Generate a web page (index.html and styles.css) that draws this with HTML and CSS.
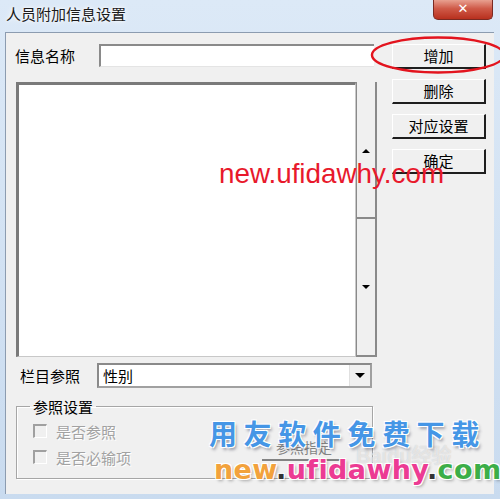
FILE: index.html
```html
<!DOCTYPE html>
<html lang="zh-CN">
<head>
    <meta charset="UTF-8">
    <title>人员附加信息设置</title>
    <link rel="stylesheet" href="styles.css">
</head>
<body>

<div class="window">
    <!-- Title Bar -->
    <div class="titlebar">
        <span class="title">人员附加信息设置</span>
        <span class="close">&#x2715;</span>
    </div>

    <!-- Dialog Body -->
    <div class="client">
        <div class="main">
            <div class="left">
                <div class="name-row">
                    <span class="label">信息名称</span>
                    <div class="field"></div>
                </div>
                <div class="list-wrap">
                    <div class="list"></div>
                    <div class="scroll">
                        <div class="scroll-part up"><span class="arrow-up"></span></div>
                        <div class="scroll-part down"><span class="arrow-down"></span></div>
                    </div>
                </div>
            </div>
            <div class="buttons">
                <div class="btn">增加</div>
                <div class="btn">删除</div>
                <div class="btn">对应设置</div>
                <div class="btn">确定</div>
            </div>
        </div>

        <div class="ref-row">
            <span class="label">栏目参照</span>
            <div class="combo">
                <span class="combo-text">性别</span>
                <span class="drop"><span class="arrow-down"></span></span>
            </div>
        </div>

        <fieldset class="group">
            <legend>参照设置</legend>
            <div class="check-row"><span class="check"></span><span>是否参照</span></div>
            <div class="check-row"><span class="check"></span><span>是否必输项</span></div>
            <div class="ghost-btn">参照指定</div>
        </fieldset>
    </div>

    <!-- Overlays -->
    <svg class="ring" width="140" height="44" viewBox="0 0 140 44">
        <ellipse cx="68" cy="20" rx="66" ry="17.5" fill="none" stroke="#e3141e" stroke-width="2.5"/>
    </svg>
    <div class="mark-red">new.ufidawhy.com</div>
    <div class="mark-baidu">Bai<span>du</span>经验</div>
    <div class="mark-blue">用友软件免费下载</div>
    <div class="mark-url"><span class="o">new</span>.<span class="p">ufidawhy</span>.<span class="g">com</span></div>
</div>

</body>
</html>
```

FILE: styles.css
```css
/* General */
body {
    margin: 0;
    font-family: "Noto Sans CJK SC", "Liberation Sans", sans-serif;
    background: #fff;
}
.window {
    position: relative;
    width: 500px;
    height: 499px;
    overflow: hidden;
    background: linear-gradient(180deg, #dce9f7 0%, #c9dbef 100%);
    display: flex;
    flex-direction: column;
}

/* Title Bar */
.titlebar {
    height: 32px;
    display: flex;
    align-items: flex-start;
    justify-content: space-between;
}
.title {
    font-size: 15px;
    line-height: 20px;
    color: #1a1a1a;
    margin: 4px 0 0 6px;
    text-shadow: 0 0 6px #fff, 0 0 3px #fff;
}
.close {
    width: 58px;
    height: 19px;
    margin-right: 7px;
    background: linear-gradient(180deg, #e8a090 0%, #cf5a48 45%, #b8301e 100%);
    border: 1px solid #7a2a22;
    border-top: none;
    border-radius: 0 0 5px 5px;
    color: #fff;
    font-size: 13px;
    font-weight: bold;
    line-height: 18px;
    text-align: center;
    font-family: "DejaVu Sans", sans-serif;
}

/* Client Area */
.client {
    flex: 1;
    margin: 0 6px 5px 5px;
    background: #f0f0f0;
    border-top: 1px solid #8c9cb0;
    border-left: 1px solid #8c9cb0;
    padding: 11px 0 0 10px;
    display: flex;
    flex-direction: column;
}
.label {
    font-size: 15px;
    color: #000;
    line-height: 20px;
}
.main {
    display: flex;
    gap: 15px;
}
.left {
    width: 361px;
}
.name-row {
    display: flex;
    align-items: center;
    height: 23px;
}
.name-row .label {
    width: 84px;
    margin-left: -1px;
}
.field {
    width: 275px;
    height: 23px;
    background: #fff;
    border-top: 2px solid #8a8a8a;
    border-left: 2px solid #8a8a8a;
    border-bottom: 1px solid #e4e4e4;
    box-sizing: border-box;
}

/* List + Scrollbar */
.list-wrap {
    display: flex;
    margin-top: 15px;
    height: 275px;
}
.list {
    width: 340px;
    background: #fff;
    border-top: 3px solid #7a7a7a;
    border-left: 3px solid #7a7a7a;
    border-right: 1px solid #c8c8c8;
    border-bottom: 1px solid #c8c8c8;
    box-sizing: border-box;
}
.scroll {
    width: 21px;
    display: flex;
    flex-direction: column;
    border: 2px solid #8a8a8a;
    border-top: none;
    border-left-width: 1px;
    box-sizing: border-box;
    background: #f0f0f0;
}
.scroll-part {
    flex: 1;
    display: flex;
    justify-content: center;
}
.scroll-part.up {
    align-items: flex-end;
    padding-bottom: 64px;
    border-bottom: 2px solid #8a8a8a;
}
.scroll-part.down {
    align-items: flex-end;
    padding-bottom: 66px;
}
.arrow-up, .arrow-down {
    width: 0;
    height: 0;
    border-left: 4px solid transparent;
    border-right: 4px solid transparent;
}
.arrow-up { border-bottom: 4px solid #000; }
.arrow-down { border-top: 4px solid #000; }

/* Buttons */
.buttons {
    display: flex;
    flex-direction: column;
    gap: 10px;
    width: 94px;
}
.btn {
    height: 25px;
    box-sizing: border-box;
    border-top: 1px solid #fff;
    border-left: 1px solid #fff;
    border-right: 2px solid #1e1e1e;
    border-bottom: 2px solid #1e1e1e;
    background: #f0f0f0;
    font-size: 15px;
    line-height: 21px;
    text-align: center;
    color: #000;
}

/* Reference Row */
.ref-row {
    display: flex;
    align-items: center;
    margin-top: 6px;
    height: 25px;
}
.ref-row .label {
    width: 77px;
    padding-left: 4px;
}
.combo {
    width: 275px;
    height: 25px;
    box-sizing: border-box;
    background: #fff;
    border-top: 2px solid #8a8a8a;
    border-left: 2px solid #8a8a8a;
    border-right: 2px solid #a0a0a0;
    border-bottom: 2px solid #a0a0a0;
    display: flex;
    align-items: center;
    justify-content: space-between;
}
.combo-text {
    font-size: 15px;
    padding-left: 4px;
    line-height: 20px;
}
.drop {
    width: 20px;
    height: 21px;
    background: #f0f0f0;
    border-left: 1px solid #e0e0e0;
    display: flex;
    align-items: center;
    justify-content: center;
}
.drop .arrow-down {
    border-left-width: 5px;
    border-right-width: 5px;
    border-top-width: 5px;
}

/* Group Box */
.group {
    position: relative;
    width: 357px;
    box-sizing: border-box;
    margin: 10px 0 0 0;
    padding: 3px 0 0 16px;
    height: 81px;
    border: 1px solid #a6a6a6;
    box-shadow: inset 1px 1px 0 #fff, 1px 1px 0 #fff;
}
.group legend {
    font-size: 15px;
    line-height: 17px;
    padding: 0 3px;
    margin-left: -3px;
    color: #000;
}
.check-row {
    display: flex;
    align-items: center;
    gap: 9px;
    height: 26px;
    font-size: 15px;
    color: #a2a2a2;
    text-shadow: 1px 1px 0 #fff;
}
.check {
    width: 14px;
    height: 14px;
    box-sizing: border-box;
    border-top: 2px solid #a0a0a0;
    border-left: 2px solid #a0a0a0;
    border-right: 1px solid #fff;
    border-bottom: 1px solid #fff;
    background: #f0f0f0;
}
.ghost-btn {
    position: absolute;
    left: 245px;
    top: 22px;
    width: 84px;
    height: 22px;
    font-size: 14px;
    line-height: 20px;
    text-align: center;
    color: #555;
    border-bottom: 2px solid #555;
    opacity: 0.7;
}

/* Watermarks */
.ring {
    position: absolute;
    left: 370px;
    top: 35px;
}
.mark-red {
    position: absolute;
    left: 219px;
    top: 160px;
    font-family: "Liberation Sans", sans-serif;
    font-size: 27.8px;
    line-height: 27px;
    color: #e8192c;
}
.mark-baidu {
    position: absolute;
    left: 356px;
    top: 440px;
    font-family: "Liberation Sans", "Noto Sans CJK SC", sans-serif;
    font-size: 20px;
    font-weight: bold;
    color: rgba(255, 255, 255, 0.55);
    text-shadow: 0 0 1px rgba(150, 150, 150, 0.5);
}
.mark-blue {
    position: absolute;
    left: 209px;
    top: 419px;
    font-family: "Noto Sans CJK SC", sans-serif;
    font-size: 28px;
    line-height: 28px;
    font-weight: bold;
    letter-spacing: 6.6px;
    color: #4596e6;
    text-shadow: -1px -1px 0 #fff, 1px -1px 0 #fff, -1px 1px 0 #fff, 1px 1px 0 #fff, 2px 3px 3px rgba(60, 60, 80, 0.45);
}
.mark-url {
    position: absolute;
    left: 214px;
    top: 455px;
    font-family: "DejaVu Sans", sans-serif;
    font-size: 27px;
    line-height: 30px;
    font-weight: bold;
    letter-spacing: 0.4px;
    color: #333;
    text-shadow: -1px -1px 0 #fff, 1px -1px 0 #fff, -1px 1px 0 #fff, 1px 1px 0 #fff, 2px 2px 3px rgba(60, 60, 60, 0.4);
}
.mark-url .o { color: #f2a23c; }
.mark-url .p { color: #ec3b93; }
.mark-url .g { color: #3cae48; }
```
